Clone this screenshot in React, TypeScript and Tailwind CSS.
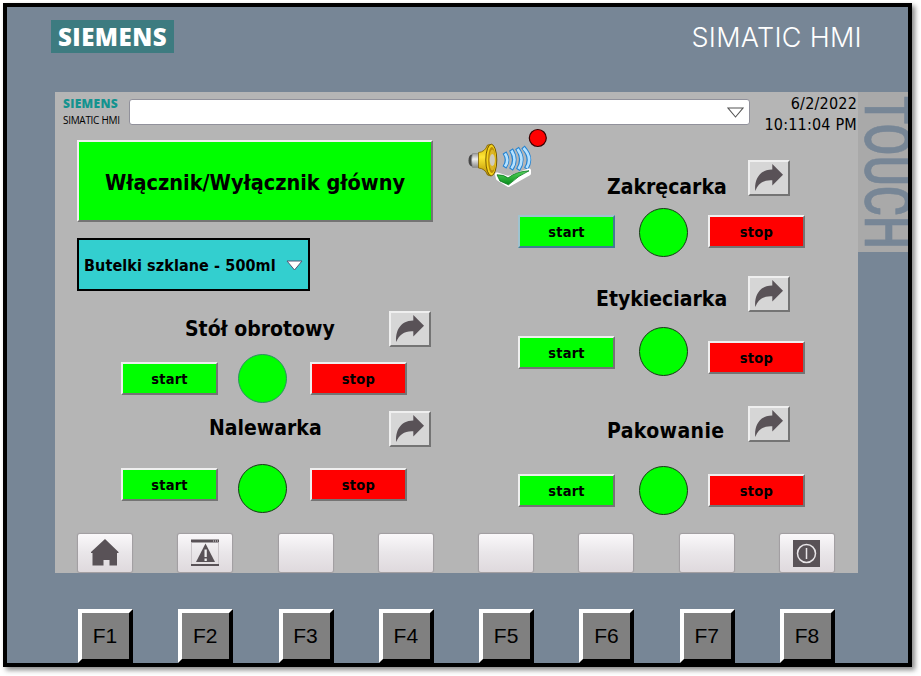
import type { ReactNode } from "react";

const tahoma = "font-['DejaVu_Sans_Condensed','DejaVu_Sans',sans-serif] [font-stretch:condensed]";

const bevel = "border-[2px] border-t-[#efefef] border-l-[#efefef] border-r-[#747474] border-b-[#747474]";
const bevelFocus = "border-[2px] border-t-[#9fc3cf] border-l-[#9fc3cf] border-r-[#417d91] border-b-[#417d91]";

function ArrowButton() {
  return (
    <button className={`h-[36px] w-[42px] shrink-0 bg-[#d6d6d6] ${bevel}`}>
      <svg className="block h-[32px] w-[38px]" viewBox="2 2 38 32" fill="#595257">
        <path d="M24.3 4 L35 14.8 L24.3 25.6 V20.2 C16 19.6 10.3 23 7.3 31 C6 21.500 10.500 9.400 24.3 9.400 Z" />
      </svg>
    </button>
  );
}

function PushButton({ label, color, className, focus = false }: { label: string; color: string; className: string; focus?: boolean }) {
  return (
    <button
      className={`flex h-[33px] w-[97px] shrink-0 items-center justify-center pt-[1px] text-[14.5px] leading-none font-bold tracking-[0.25px] text-black ${tahoma} ${focus ? bevelFocus : bevel} ${color} ${className}`}
    >
      {label}
    </button>
  );
}

interface MachineProps {
  title: string;
  header: string;
  titleClass: string;
  controls: string;
  start: string;
  lamp: string;
  stop: string;
  focus?: boolean;
}

function Machine({ title, header, titleClass, controls, start, lamp, stop, focus }: MachineProps) {
  return (
    <section>
      <div className={`flex h-[36px] ${header}`}>
        <h2 className={`text-[21px] leading-[26px] font-bold whitespace-nowrap text-black ${tahoma} ${titleClass}`}>{title}</h2>
        <ArrowButton />
      </div>
      <div className={`flex items-start ${controls}`}>
        <PushButton label="start" color="bg-[#00ff00]" className={start} focus={focus} />
        <div className={`size-[49px] shrink-0 rounded-full border bg-[#00ff00] ${lamp}`} />
        <PushButton label="stop" color="bg-[#ff0000]" className={stop} />
      </div>
    </section>
  );
}

function AlarmIndicator() {
  return (
    <svg className="absolute top-[34px] left-[409px] h-[64px] w-[88px]" viewBox="464 126 88 64">
      <defs>
        <linearGradient id="cone" x1="0" y1="0" x2="0" y2="1">
          <stop offset="0" stopColor="#d9ae08" />
          <stop offset=".4" stopColor="#ffe636" />
          <stop offset="1" stopColor="#b88b00" />
        </linearGradient>
        <linearGradient id="magnet" x1="0" y1="0" x2="0" y2="1">
          <stop offset="0" stopColor="#9a9a9a" />
          <stop offset=".4" stopColor="#efefef" />
          <stop offset="1" stopColor="#888" />
        </linearGradient>
        <linearGradient id="tick" x1="0" y1="0" x2="0" y2="1">
          <stop offset="0" stopColor="#54d65a" />
          <stop offset="1" stopColor="#078a1b" />
        </linearGradient>
      </defs>
      <path d="M472 154.500 Q468.500 155 468.500 160.500 Q468.500 165.500 472 166.500 H474 V154.500 Z" fill="#484848" />
      <path d="M472.500 153.500 H480 V167.500 H472.500 Q470.500 160 472.500 153.500 Z" fill="url(#magnet)" stroke="#888" strokeWidth=".6" />
      <path d="M478.500 152.500 Q485 152 487.500 145 L491 144.500 V176 L487.500 175 Q485 168.500 478.500 168 Z" fill="url(#cone)" stroke="#7d6000" strokeWidth=".8" />
      <ellipse cx="491.300" cy="160" rx="5.500" ry="15.800" fill="#f4d21a" stroke="#755900" strokeWidth="1" />
      <ellipse cx="491.800" cy="160" rx="3.700" ry="13" fill="#b98c08" />
      <ellipse cx="492.300" cy="160" rx="3" ry="10.500" fill="#dcb626" />
      <ellipse cx="492.300" cy="160" rx="2.600" ry="6" fill="#cfcbbd" />
      <g fill="none" strokeLinecap="butt">
        <path d="M504.500 152.500 Q509.500 160 504.500 167.500 M511 149.500 Q517.500 160 511 169.500 M517 148 Q525 159 518 170 M523 147 Q533 158 526 169" stroke="#2584d2" strokeWidth="4.600" />
        <path d="M505 153.500 Q509.500 160 505 166.500 M511.500 150.500 Q517.500 160 511.500 168.500 M517.500 149 Q525 159 518.500 169 M523.500 148 Q533 158 526.500 168" stroke="#b6e2ff" strokeWidth="2.600" />
      </g>
      <path d="M497 174.500 L508 178 L529 170.500 L529 173.500 L508.500 185 L498 178.500 Z" fill="#fff" stroke="#fff" strokeWidth="4" strokeLinejoin="round" />
      <path d="M497 174.800 Q504 174.500 508 178 Q516 171.500 529 170.800 Q519 175 508.500 184.800 L500 181 Z" fill="url(#tick)" stroke="#08771c" strokeWidth=".8" strokeLinejoin="round" />
      <circle cx="537.800" cy="138" r="8.500" fill="#f00" stroke="#350000" strokeWidth="1.200" />
    </svg>
  );
}

function SoftKey({ children }: { children?: ReactNode }) {
  return (
    <button className="flex h-[38px] w-[54px] items-center justify-center rounded-[2px] bg-linear-to-b from-[#faf8fa] via-[#e9e6e9] to-[#dfd9dd] shadow-[0_0_1px_1px_#a09da0]">
      {children}
    </button>
  );
}

const softKeys: ReactNode[] = [
  <svg key="home" className="h-[28px] w-[28px]" viewBox="0 0 28 28" fill="#595257">
    <path d="M14 0 L27.500 13 V14 H26 V26.500 H18.500 V21 H12.500 V26.500 H1.500 V14 H0 V13 Z" />
  </svg>,
  <svg key="alarms" className="h-[28px] w-[28px]" viewBox="0 0 28 28">
    <path d="M0 .5 H28 V3.500 H0 Z M0 25 H28 V27 H0 Z" fill="#595257" />
    <path d="M22 2 H23 M24 2 H25 M26 2 H27" stroke="#ddd" />
    <path d="M.5 3.500 V25 M27.500 3.500 V25" stroke="#cbc6ca" />
    <path d="M14.500 4.500 L24 23 H5 Z" fill="#595257" />
    <path d="M13.500 10.500 H15.800 V18 H13.500 Z M13.500 19.500 H15.800 V22 H13.500 Z" fill="#eee" />
  </svg>,
  null,
  null,
  null,
  null,
  null,
  <svg key="power" className="h-[27px] w-[27px]" viewBox="0 0 27 27">
    <path d="M0 0 H27 V27 H0 Z" fill="#595257" />
    <circle cx="13.500" cy="13.500" r="9" fill="none" stroke="#e8e5e8" strokeWidth="1.500" />
    <path d="M13.500 8 V19" stroke="#e8e5e8" strokeWidth="1.500" />
  </svg>,
];

const lampDark = "border-[#183818]";

export default function App() {
  return (
    <div className="h-[676px] w-[921px] overflow-hidden bg-white pt-[3px] pl-[3px]">
      <main className="flex h-[664px] w-[909px] flex-col border-[4px] border-black bg-[#778696] shadow-[3px_3px_5px_#888]">
        <header className="flex h-[85px] shrink-0 items-start justify-between pt-[13px] pr-[46px] pl-[44px]">
          <div className="flex h-[33px] w-[123px] items-center justify-center bg-[#3d7b80] font-['Open_Sans',sans-serif] text-[24px] leading-none font-extrabold tracking-[0.5px] text-white">
            SIEMENS
          </div>
          <div className="mt-[1px] font-['Inter',sans-serif] text-[27px] leading-[34px] font-light tracking-[0.3px] whitespace-nowrap text-white">
            SIMATIC HMI
          </div>
        </header>

        <div className="flex h-[481px] shrink-0 items-start pl-[48px]">
          <div className="relative flex h-[481px] w-[803px] shrink-0 flex-col bg-[#b5b5b5]">
            <div className="flex h-[48px] shrink-0 items-start">
              <div className="w-[73px] pt-[4px] pl-[8px] font-['Open_Sans',sans-serif] whitespace-nowrap">
                <div className="text-[12px] leading-[16px] font-extrabold tracking-[0.3px] text-[#14938f]">SIEMENS</div>
                <div className="text-[10px] leading-[16px] tracking-[-0.3px] text-black">SIMATIC HMI</div>
              </div>
              <div className="mt-[7px] ml-[1px] flex h-[26px] w-[621px] items-center justify-end rounded-[3px] border border-[#91919b] bg-white pr-[5px]">
                <svg className="h-[11px] w-[17px]" viewBox="0 0 17 11" fill="none" stroke="#555" strokeWidth="1.100">
                  <path d="M1 1 H16 L8.500 10 Z" />
                </svg>
              </div>
              <div className={`ml-auto pt-[1px] pr-[1px] text-right text-[16px] leading-[21px] tracking-[0.2px] whitespace-nowrap text-black ${tahoma}`}>
                <div>6/2/2022</div>
                <div>10:11:04 PM</div>
              </div>
            </div>

            <div className="flex h-[393px] shrink-0">
              <div className="w-[408px] shrink-0 pl-[22px]">
                <button
                  className={`flex h-[82px] w-[356px] items-center justify-center bg-[#00ff00] pt-[4px] text-[21.5px] font-bold whitespace-nowrap text-black ${tahoma} ${bevel}`}
                >
                  Włącznik/Wyłącznik główny
                </button>
                <button
                  className={`mt-[16px] flex h-[53px] w-[233px] items-center justify-between border-[2px] border-black bg-[#33cfcf] pt-[2px] pr-[5px] pl-[5px] text-[16px] font-bold tracking-[0.1px] whitespace-nowrap text-black ${tahoma}`}
                >
                  Butelki szklane - 500ml
                  <svg className="h-[11px] w-[17px]" viewBox="0 0 17 11" fill="#fff" stroke="#557" strokeWidth="1">
                    <path d="M1 1 H16 L8.500 10 Z" />
                  </svg>
                </button>
                <Machine
                  title="Stół obrotowy"
                  header="mt-[20px] pl-[108px]"
                  titleClass="mt-[5px] w-[204px]"
                  controls="mt-[7px] pl-[44px]"
                  start="mt-[8px]"
                  lamp="ml-[20px] border-[#2b9060]"
                  stop="mt-[8px] ml-[23px]"
                />
                <Machine
                  title="Nalewarka"
                  header="mt-[8px] pl-[132px]"
                  titleClass="mt-[4px] w-[180px]"
                  controls="mt-[17px] pl-[44px]"
                  start="mt-[4px]"
                  lamp={`ml-[20px] ${lampDark}`}
                  stop="mt-[4px] ml-[23px]"
                />
              </div>

              <div className="w-[395px] shrink-0 pt-[20px]">
                <Machine
                  title="Zakręcarka"
                  header="pl-[144px]"
                  titleClass="mt-[14px] w-[141px]"
                  controls="mt-[12px] pl-[55px]"
                  start="mt-[7px]"
                  lamp={`ml-[24px] ${lampDark}`}
                  stop="mt-[7px] ml-[20px]"
                  focus
                />
                <Machine
                  title="Etykieciarka"
                  header="mt-[19px] pl-[133px]"
                  titleClass="mt-[10px] w-[152px]"
                  controls="mt-[15px] pl-[55px]"
                  start="mt-[9px]"
                  lamp={`ml-[24px] ${lampDark}`}
                  stop="mt-[14px] ml-[20px]"
                />
                <Machine
                  title="Pakowanie"
                  header="mt-[30px] pl-[144px]"
                  titleClass="mt-[12px] w-[141px] tracking-[0.4px]"
                  controls="mt-[24px] pl-[55px]"
                  start="mt-[8px]"
                  lamp={`ml-[24px] ${lampDark}`}
                  stop="mt-[8px] ml-[20px]"
                />
              </div>
            </div>

            <div className="flex shrink-0 justify-between pt-[1px] pr-[24px] pl-[23px]">
              {softKeys.map((icon, i) => (
                <SoftKey key={i}>{icon}</SoftKey>
              ))}
            </div>
            <AlarmIndicator />
          </div>

          <svg className="h-[160px] w-[50px] shrink-0 bg-[#a9a9a9]" viewBox="0 0 50 160">
            <text
              transform="translate(6.500 4) rotate(90)"
              textLength="153"
              lengthAdjust="spacingAndGlyphs"
              className="fill-[#778696] stroke-[#778696] stroke-[0.6] font-['Roboto',sans-serif] text-[64px] font-medium"
            >
              TOUCH
            </text>
          </svg>
        </div>

        <div className="flex shrink-0 justify-between pt-[36px] pr-[73px] pl-[71px]">
          {["F1", "F2", "F3", "F4", "F5", "F6", "F7", "F8"].map((key) => (
            <button
              key={key}
              className="flex h-[54px] w-[55px] items-center justify-center border-[4px] border-t-white border-r-black border-b-black border-l-white bg-[#808080] pr-[1px] pb-[2px] font-['Liberation_Sans',sans-serif] text-[21px] leading-none text-black"
            >
              {key}
            </button>
          ))}
        </div>
      </main>
    </div>
  );
}
